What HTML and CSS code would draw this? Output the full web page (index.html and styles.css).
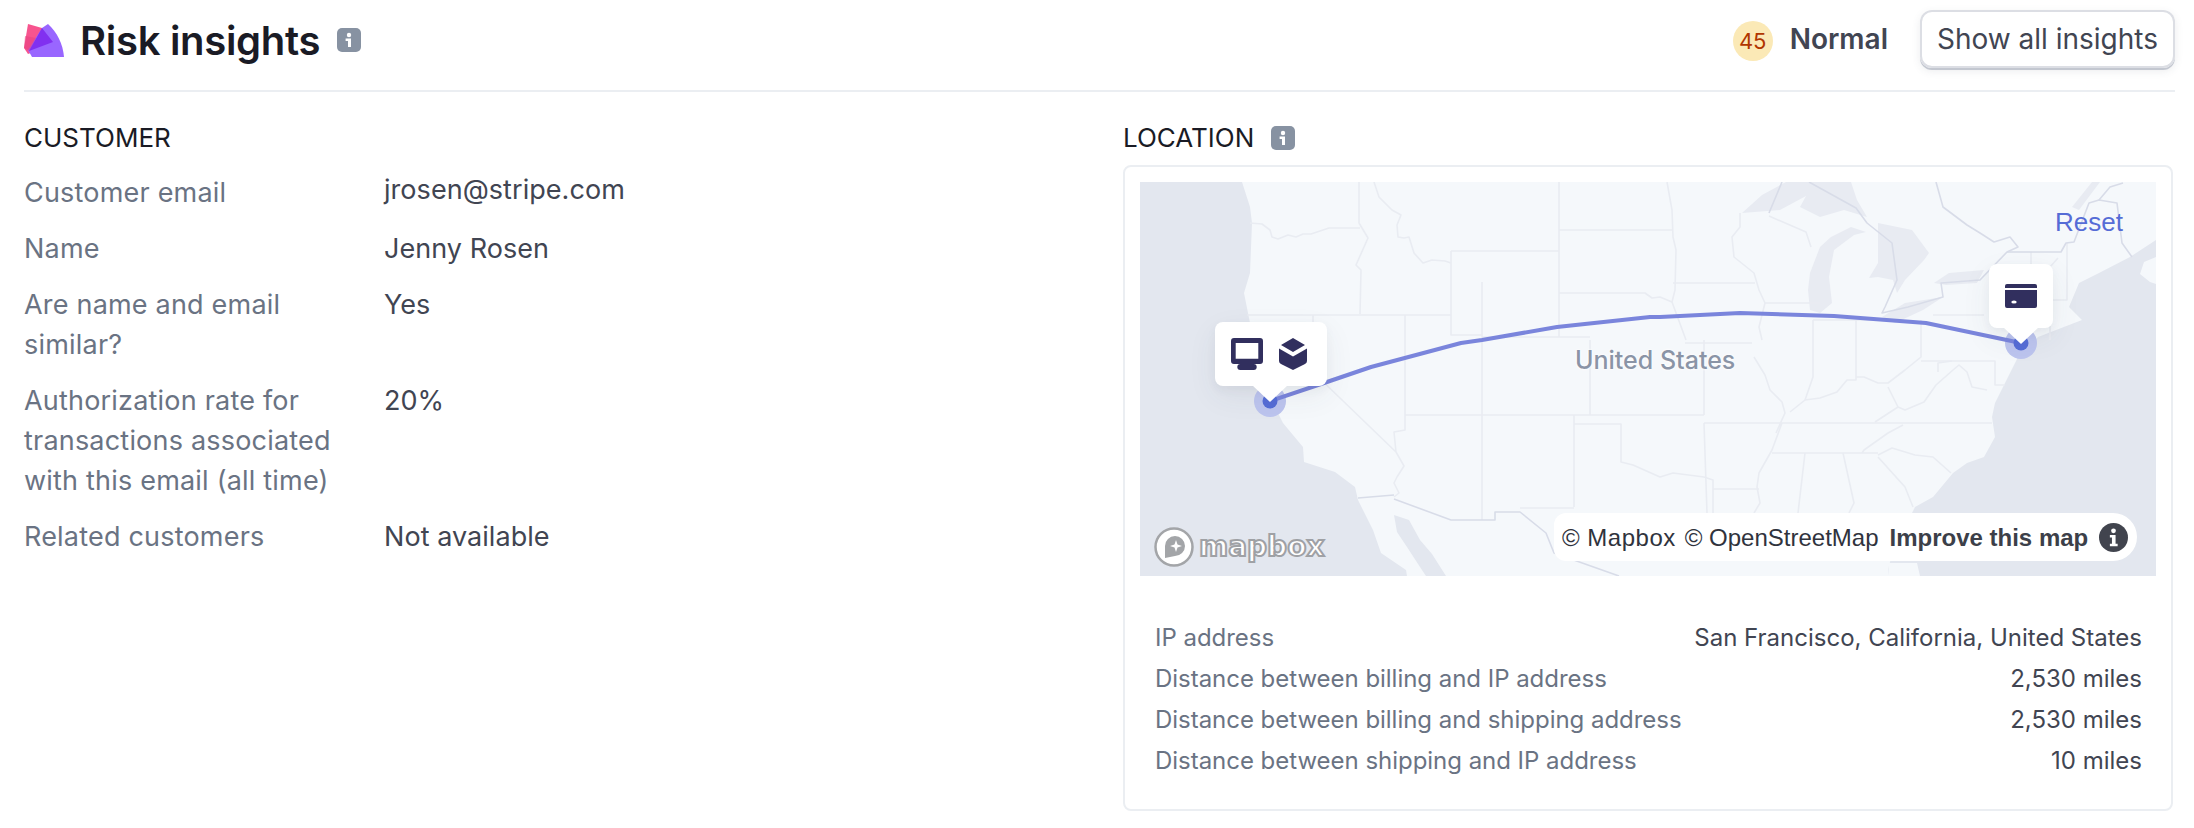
FILE: index.html
```html
<!DOCTYPE html>
<html lang="en">
<head>
<meta charset="utf-8">
<title>Risk insights</title>
<link rel="stylesheet" href="styles.css">
</head>
<body>
<main class="page">
  <header class="head">
    <svg class="logo" viewBox="0 0 40 33" aria-hidden="true">
      <path fill="#f7548e" d="M4 0 18 4 27 21 4 30 0 24Z"/>
      <path fill="#9966ff" d="M24 0C33 8 39 20 40 33H8L4 26 18 4Z"/>
      <path fill="#e83f80" d="M0 24 1 12 12 14 6 27 4 26Z" opacity=".55"/>
      <path fill="#8130f0" d="M18 4 29 18 5 27Z"/>
    </svg>
    <h1 class="title">Risk insights</h1>
    <svg class="info" viewBox="0 0 24 24" aria-hidden="true"><rect width="24" height="24" rx="5" fill="#8792a2"/><circle cx="12" cy="7" r="2.2" fill="#fff"/><path d="M8.6 10.6H14V19H11V13H8.6Z" fill="#fff"/></svg>
    <div class="score">
      <span class="dot">45</span>
      <span class="level">Normal</span>
      <button class="btn" type="button">Show all insights</button>
    </div>
  </header>

  <div class="cols">
    <section class="customer">
      <h2 class="sec">CUSTOMER</h2>
      <dl class="facts">
        <dt>Customer email</dt><dd class="up">jrosen@stripe.com</dd>
        <dt>Name</dt><dd>Jenny Rosen</dd>
        <dt>Are name and email similar?</dt><dd>Yes</dd>
        <dt>Authorization rate for transactions associated with this email (all time)</dt><dd>20%</dd>
        <dt>Related customers</dt><dd>Not available</dd>
      </dl>
    </section>

    <section class="location">
      <h2 class="sec sec-loc">LOCATION
        <svg class="info" viewBox="0 0 24 24" aria-hidden="true"><rect width="24" height="24" rx="5" fill="#8792a2"/><circle cx="12" cy="7" r="2.2" fill="#fff"/><path d="M8.6 10.6H14V19H11V13H8.6Z" fill="#fff"/></svg>
      </h2>
      <div class="card">
        <div class="map">
          <svg class="geo" viewBox="0 0 1016 394" aria-hidden="true">
            <rect width="1016" height="394" fill="#f5f8fb"/>
            <g fill="#e3e7ef">
              <path d="M0 0H102L110 25 112 41 110 91 104 111 110 141 116 170 130 205 135 225 143 241 163 265 164 280 195 290 215 305 218 318 233 348 241 371 266 388 267 394H0Z"/>
              <path d="M254 333 269 338 280 358 292 372 306 394 286 394 280 385 267 365 257 350Z"/>
              <path d="M1016 58 990 75 959 91 939 101 929 125 942 138 898 155 878 175 855 221 852 235 855 255 844 275 827 281 813 291 793 315 775 325 772 331 755 360 748 388 748 394H1016Z"/>
            </g>
            <g fill="#f5f8fb"><path d="M748 394 749 381 777 381 780 394Z"/><path d="M1016 75 1004 80 1000 92 1010 100 1016 102Z"/></g>
            <g fill="#e8ebf2">
              <path d="M602 31 622 13 646 0H711L717 18 727 35 704 28 680 35 660 25 666 14 640 28Z"/>
              <path d="M668 108 670 91 680 65 691 55 711 45 726 50 714 53 694 68 689 95 692 121 680 131 670 128Z"/>
              <path d="M738 41 772 48 789 71 784 78 765 98 757 111 753 98 738 95 729 96 738 81 738 58Z"/>
              <path d="M742 135 765 121 803 115 783 128 755 141Z"/>
              <path d="M794 101 809 91 844 88 837 101 806 103Z"/>
              <path d="M932 25 952 0H960L939 28Z"/>
            </g>
            <g class="lines">
              <path d="M110 41 122 42 130 48 132 55 138 57 148 53 156 55 163 52 171 52 189 46 220 46"/>
              <path d="M219 0V41L228 56 216 83 221 88 220 132"/>
              <path d="M234 0 239 15 252 28 261 33 257 43 258 55 264 56 269 55 274 71 283 81 292 78 305 79 311 81"/>
              <path d="M419 0V155M311 69H419M311 69V153H342M342 155H450"/>
              <path d="M419 48H533M419 111H505L512 116 520 115 532 120"/>
              <path d="M107 133H311M173 133V190L256 270M265 133V248L254 250 256 270 264 284 257 295 254 301 259 311 254 315"/>
              <path d="M265 233H564M342 100V338M434 233V325M380 326H434M450 158V233"/>
              <path d="M434 242H481V280L493 283 520 295 533 291 564 295 573 298V331M573 307H619"/>
              <path d="M564 158V233M564 241H642M564 241 567 331M545 161H612"/>
              <path d="M614 175 625 193 630 208 642 220 645 231 636 251M642 241 632 268 619 291 617 305 620 321 614 331"/>
              <path d="M673 138V195L665 218 650 230M665 218 680 216 697 210 707 198 716 198V138M716 195 724 195 738 201 748 201 765 188 781 175V138"/>
              <path d="M748 205 758 225 735 240M758 225 765 228 784 220 796 203 813 188 819 183 827 190 832 205 847 208M798 190V181L812 179"/>
              <path d="M781 179H855V203H865M642 241 852 241M763 243 748 251 724 268 722 271M632 271H738"/>
              <path d="M665 271 658 331M703 271 714 321 709 331M738 273 752 266 775 273 793 275 811 291M738 275 747 285 765 305 773 325"/>
              <path d="M527 0 532 28 533 55 536 68 535 108 532 120 546 158M533 101H615M625 121H680"/>
              <path d="M600 31V45L592 55 594 75 614 91 619 108 625 121 619 145 622 158M629 34 666 50 671 65"/>
              <path d="M673 138H742M793 133H844M891 70V85L910 85 918 76M927 61V118H910M910 118V158"/>
            </g>
            <g class="lines lines-dark">
              <path d="M642 0 629 31M669 0 716 26 727 41 752 61 757 98 745 125 742 131 768 125 803 115 801 101 840 98 867 70H921L926 61 934 60 949 21 959 18 977 21 982 61 992 75"/>
              <path d="M796 0 803 25 827 43 840 51 854 60 870 55 878 65 867 70"/>
              <path d="M959 18 970 5 983 1"/>
              <path d="M218 316 254 313M254 317 311 338H355V330H380L406 351 414 371 479 394"/>
            </g>
            <circle cx="130" cy="219" r="16" fill="#bcc4ee"/>
            <circle cx="881" cy="161" r="16" fill="#bcc4ee"/>
            <path class="route" d="M130 219 184 201 231 185 321 161 342 158 417 145 510 135 520 135 600 131 694 134 786 141 881 161"/>
            <circle cx="130" cy="219" r="7.5" fill="#556cd6"/>
            <circle cx="881" cy="161" r="7.5" fill="#556cd6"/>
          </svg>

          <span class="map-label">United States</span>
          <a class="reset">Reset</a>

          <div class="pop pop-west">
            <svg class="ico" viewBox="0 0 32 32" aria-hidden="true"><path fill="#312f5e" fill-rule="evenodd" d="M3 0H29A3 3 0 0 1 32 3V23A3 3 0 0 1 29 26H3A3 3 0 0 1 0 23V3A3 3 0 0 1 3 0ZM4.700 5V20.700H27.300V5Z"/><rect x="6.300" y="26" width="19.400" height="6" rx="3" fill="#312f5e"/></svg>
            <svg class="ico" viewBox="0 0 32 32" aria-hidden="true"><path fill="#312f5e" d="M16 0 28 7 16 14 4 7ZM2 10.500 16 18.500 30 10.500V23Q30 25 28 26L16 32 4 26Q2 25 2 23Z"/></svg>
          </div>
          <div class="pop pop-east">
            <svg class="ico" viewBox="0 0 32 32" aria-hidden="true"><path fill="#312f5e" fill-rule="evenodd" d="M2 4H30A2 2 0 0 1 32 6V8H0V6A2 2 0 0 1 2 4ZM0 10H32V26A2 2 0 0 1 30 28H2A2 2 0 0 1 0 26ZM9 20.400A2.700 1.600 0 1 0 9 23.600 2.700 1.600 0 1 0 9 20.400Z"/></svg>
          </div>

          <div class="mapbox">
            <svg class="mb-mark" viewBox="0 0 40 42" aria-hidden="true"><circle cx="20" cy="21" r="18.500" fill="#fff" stroke="#a3a5a8" stroke-width="2.500"/><path fill="#a3a5a8" d="M11 32V20A10 10 0 1 1 21 30Z"/><path fill="#fff" d="M22 14 23.500 18.500 28 20 23.500 21.500 22 26 20.500 21.500 16 20 20.500 18.500Z"/></svg>
            <span class="mb-word">mapbox</span>
          </div>

          <div class="attr">
            <span class="attr-first">© Mapbox</span><span>© OpenStreetMap</span><strong>Improve this map</strong>
            <svg class="attr-i" viewBox="0 0 28 28" aria-hidden="true"><circle cx="14" cy="14" r="14" fill="#41444e"/><circle cx="14" cy="7.500" r="2.300" fill="#fff"/><path fill="#fff" d="M10.500 11.500H16V20H18V22.500H10.500V20H12.500V14H10.500Z"/></svg>
          </div>
        </div>

        <dl class="dist">
          <div class="dist-row"><dt>IP address</dt><dd>San Francisco, California, United States</dd></div>
          <div class="dist-row"><dt>Distance between billing and IP address</dt><dd>2,530 miles</dd></div>
          <div class="dist-row"><dt>Distance between billing and shipping address</dt><dd>2,530 miles</dd></div>
          <div class="dist-row"><dt>Distance between shipping and IP address</dt><dd>10 miles</dd></div>
        </dl>
      </div>
    </section>
  </div>
</main>
</body>
</html>
```

FILE: styles.css
```css
* { box-sizing: border-box; }
html, body { margin: 0; background: #fff; }
body { font-family: Inter, "Liberation Sans", sans-serif; color: #414552; }
dl, dd, dt, h1, h2 { margin: 0; font-weight: 400; }

.page { padding: 0 19px 0 24px; width: 2194px; height: 828px; overflow: hidden; }

.head { display: flex; align-items: center; height: 92px; padding-bottom: 10px; border-bottom: 2px solid #ebeef2; }
.logo { width: 40px; height: 33px; margin-right: 16px; }
.title { font-size: 40px; font-weight: 600; color: #1a1b25; line-height: 44px; margin: 2px 17px 0 0; letter-spacing: -0.3px; }
.info { width: 24px; height: 24px; flex: none; }

.score { margin: 0 0 3px auto; display: flex; align-items: center; }
.dot { width: 40px; height: 40px; margin: 5px 17px 0 0; border-radius: 50%; background: #fbe9b6; color: #b13600; font-size: 22px; display: flex; align-items: center; justify-content: center; }
.level { font-size: 28px; font-weight: 600; color: #414552; margin-right: 32px; }
.btn { width: 255px; height: 58px; padding: 0; background: #fff; border: 0; border-radius: 12px; font: 400 28px Inter, sans-serif; color: #414552; box-shadow: 0 0 0 2px #dcdee4 inset, 0 2px 0 #c3c7d0, 0 3px 8px rgba(60,66,87,.1); }

.cols { display: grid; grid-template-columns: 1099px 1050px; }
.sec { font-size: 26px; font-weight: 400; color: #1a1b25; line-height: 32px; margin-top: 30px; }
.sec-loc { display: flex; align-items: center; gap: 17px; }

.facts { display: grid; grid-template-columns: 360px 1fr; row-gap: 16px; margin-top: 19px; font-size: 27px; line-height: 40px; }
.facts dt { color: #6a7383; width: 340px; letter-spacing: 0.2px; }
.facts dd { color: #414552; letter-spacing: 0.05px; }
.facts .up { margin-top: -3px; }

.card { margin-top: 11px; height: 646px; border: 2px solid #ebeef2; border-radius: 8px; padding: 15px; }
.map { position: relative; width: 1016px; height: 394px; overflow: hidden; }
.geo { display: block; width: 1016px; height: 394px; }
.lines { fill: none; stroke: #e9ecf2; stroke-width: 1.6; stroke-linejoin: round; }
.lines-dark { stroke: #d8dce8; }
.route { fill: none; stroke: #7a85dc; stroke-width: 4; stroke-linejoin: round; stroke-linecap: round; }

.map-label { position: absolute; left: 435px; top: 163px; font-size: 25px; font-weight: 500; color: #8a94a6; text-shadow: 0 0 3px #fff, 0 0 3px #fff; white-space: nowrap; }
.reset { position: absolute; left: 915px; top: 25px; font: 26px "Liberation Sans", sans-serif; color: #556cd6; }

.pop { position: absolute; display: flex; gap: 14px; padding: 16px; height: 64px; background: #fff; border-radius: 8px; box-shadow: 0 10px 30px rgba(60,66,87,.07), 0 4px 10px rgba(60,66,87,.05); }
.pop::after { content: ""; position: absolute; bottom: -16px; width: 0; height: 0; border-left: 18px solid transparent; border-right: 18px solid transparent; border-top: 17px solid #fff; }
.pop-west { left: 75px; top: 140px; padding-right: 18px; }
.pop-west::after { left: 37px; }
.pop-east { left: 849px; top: 82px; }
.pop-east::after { left: 14px; }
.ico { width: 32px; height: 32px; display: block; }

.mapbox { position: absolute; left: 14px; bottom: 8px; display: flex; align-items: center; gap: 5px; }
.mb-mark { width: 40px; height: 42px; }
.mb-word { font: 700 28px "DejaVu Sans", sans-serif; color: #fff; -webkit-text-stroke: 2px #9fa1a5; line-height: 36px; }

.attr { position: absolute; left: 414px; top: 331px; width: 583px; height: 48px; display: flex; align-items: center; gap: 9px; padding: 1px 9px 0 8px; background: #fff; border-radius: 12px 24px 24px 12px; font: 24px "Liberation Sans", sans-serif; color: #30333d; white-space: nowrap; }
.attr-first { letter-spacing: 0.5px; }
.attr strong { font-weight: 700; color: #3c3f49; margin-left: 2px; }
.attr-i { width: 29px; height: 29px; flex: none; margin-left: 2px; }

.dist { padding: 41px 0 0 15px; margin-right: 14px; display: flex; flex-direction: column; font-size: 24px; line-height: 41px; }
.dist-row { display: flex; justify-content: space-between; }
.dist dt { color: #6a7383; letter-spacing: -0.03px; }
.dist dd { color: #414552; }
```
